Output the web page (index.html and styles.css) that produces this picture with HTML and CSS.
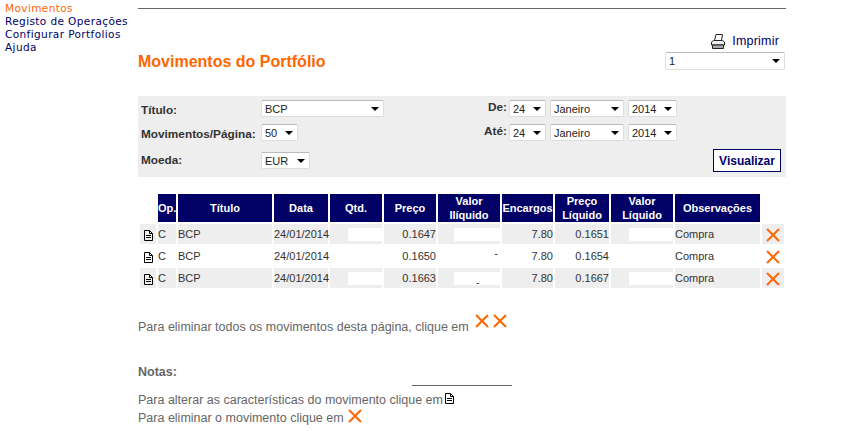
FILE: index.html
```html
<!DOCTYPE html>
<html lang="pt">
<head>
    <meta charset="UTF-8">
    <title>Movimentos do Portfólio</title>
    <link rel="stylesheet" href="styles.css">
</head>
<body>
    <svg class="defs" width="0" height="0">
        <symbol id="ico-x" viewBox="0 0 14 14">
            <path d="M1 1 13 13M13 1 1 13" fill="none" stroke="#f60" stroke-width="2"/>
        </symbol>
        <symbol id="ico-doc" viewBox="0 0 9 11">
            <path d="M.5.5h5l3 3v7h-8zM5.500.5v3h3M2 5.500h5M2 7.500h5" fill="none" stroke="#000" stroke-width="1"/>
        </symbol>
    </svg>

    <div class="sidebar">
        <a class="active" href="#">Movimentos</a>
        <a href="#">Registo de Operações</a>
        <a href="#">Configurar Portfolios</a>
        <a href="#">Ajuda</a>
    </div>

    <div class="main">
        <div class="top-line"></div>

        <div class="head">
            <h1>Movimentos do Portfólio</h1>
            <div class="head-right">
                <a class="print" href="#">
                    <svg width="16" height="16" viewBox="0 0 16 16">
                        <path d="M4.500 7.500 6 1.500h6.500L11.500 7.500" fill="#fff" stroke="#222"/>
                        <path d="M1.500 12V9l2-1.500h9l2 1.500v3z" fill="#eee" stroke="#222"/>
                        <path d="M2.500 12h11v3.500h-11z" fill="#aaa" stroke="#222"/>
                    </svg>
                    Imprimir
                </a>
                <div class="pick w-pagina"><select><option>1</option></select></div>
            </div>
        </div>

        <form class="filters">
            <label>Título:</label>
            <div class="pick w-titulo"><select><option>BCP</option></select></div>
            <label class="date-label">De:</label>
            <div class="date-row">
                <div class="pick w-num"><select><option>24</option></select></div>
                <div class="pick w-mes"><select><option>Janeiro</option></select></div>
                <div class="pick w-ano"><select><option>2014</option></select></div>
            </div>

            <label>Movimentos/Página:</label>
            <div class="pick w-num"><select><option>50</option></select></div>
            <label class="date-label">Até:</label>
            <div class="date-row">
                <div class="pick w-num"><select><option>24</option></select></div>
                <div class="pick w-mes"><select><option>Janeiro</option></select></div>
                <div class="pick w-ano"><select><option>2014</option></select></div>
            </div>

            <label class="label-mid">Moeda:</label>
            <div class="pick w-ano pick-mid"><select><option>EUR</option></select></div>
            <button class="btn" type="button">Visualizar</button>
        </form>

        <table class="moves">
            <colgroup>
                <col class="c-16"><col class="c-18"><col class="c-94"><col class="c-54">
                <col class="c-52"><col class="c-52"><col class="c-62"><col class="c-51">
                <col class="c-54"><col class="c-62"><col class="c-85"><col class="c-22">
            </colgroup>
            <thead>
                <tr>
                    <td class="blank"></td>
                    <th>Op.</th>
                    <th>Título</th>
                    <th>Data</th>
                    <th>Qtd.</th>
                    <th>Preço</th>
                    <th>Valor Ilíquido</th>
                    <th>Encargos</th>
                    <th>Preço Líquido</th>
                    <th>Valor Líquido</th>
                    <th>Observações</th>
                    <td class="blank"></td>
                </tr>
            </thead>
            <tbody>
                <tr>
                    <td class="ico"><svg class="doc"><use href="#ico-doc"/></svg></td>
                    <td>C</td>
                    <td>BCP</td>
                    <td>24/01/2014</td>
                    <td><span class="blot blot-q"></span></td>
                    <td class="num">0.1647</td>
                    <td><span class="blot blot-v"></span></td>
                    <td class="num">7.80</td>
                    <td class="num">0.1651</td>
                    <td><span class="blot blot-l"></span></td>
                    <td>Compra</td>
                    <td class="ico"><svg class="cross"><use href="#ico-x"/></svg></td>
                </tr>
                <tr>
                    <td class="ico"><svg class="doc"><use href="#ico-doc"/></svg></td>
                    <td>C</td>
                    <td>BCP</td>
                    <td>24/01/2014</td>
                    <td></td>
                    <td class="num">0.1650</td>
                    <td class="num"><span class="dash">-</span></td>
                    <td class="num">7.80</td>
                    <td class="num">0.1654</td>
                    <td></td>
                    <td>Compra</td>
                    <td class="ico"><svg class="cross"><use href="#ico-x"/></svg></td>
                </tr>
                <tr>
                    <td class="ico"><svg class="doc"><use href="#ico-doc"/></svg></td>
                    <td>C</td>
                    <td>BCP</td>
                    <td>24/01/2014</td>
                    <td><span class="blot blot-q"></span></td>
                    <td class="num">0.1663</td>
                    <td><span class="blot blot-v blot-dash">-</span></td>
                    <td class="num">7.80</td>
                    <td class="num">0.1667</td>
                    <td><span class="blot blot-l"></span></td>
                    <td>Compra</td>
                    <td class="ico"><svg class="cross"><use href="#ico-x"/></svg></td>
                </tr>
            </tbody>
        </table>

        <p class="delete-all">
            Para eliminar todos os movimentos desta página, clique em
            <span class="delete-icons">
                <svg class="cross"><use href="#ico-x"/></svg>
                <svg class="cross"><use href="#ico-x"/></svg>
            </span>
        </p>

        <p class="notes-title">Notas:</p>
        <div class="note-line"></div>
        <p class="note note-first">Para alterar as características do movimento clique em <svg class="doc"><use href="#ico-doc"/></svg></p>
        <p class="note">Para eliminar o movimento clique em <svg class="cross"><use href="#ico-x"/></svg></p>
    </div>
</body>
</html>
```

FILE: styles.css
```css
* {
    margin: 0;
    padding: 0;
    box-sizing: border-box;
}

body {
    display: flex;
    font-family: "Liberation Sans", Arial, sans-serif;
    font-size: 12.5px;
    color: #666;
    background-color: #fff;
}

.defs {
    position: absolute;
}

.sidebar {
    width: 138px;
    flex-shrink: 0;
    padding: 2px 0 0 5px;
    display: flex;
    flex-direction: column;
    font-family: "DejaVu Sans", Verdana, sans-serif;
    font-size: 10.5px;
    letter-spacing: 0.4px;
    line-height: 13px;
}

.sidebar a {
    color: #000066;
    text-decoration: none;
}

.sidebar a.active {
    color: #ff6600;
}

.main {
    width: 648px;
    padding-top: 8px;
}

.top-line {
    height: 1px;
    background-color: #666;
}

.head {
    display: flex;
    justify-content: space-between;
    align-items: flex-end;
    margin-top: 24px;
    height: 37px;
}

h1 {
    font-size: 16px;
    line-height: 18px;
    color: #ff6600;
    margin-bottom: -1px;
}

.head-right {
    display: flex;
    flex-direction: column;
    align-items: flex-end;
    gap: 3px;
    padding-right: 1px;
}

.print {
    display: flex;
    align-items: center;
    gap: 6px;
    padding-right: 6px;
    letter-spacing: 0.2px;
    color: #000066;
    text-decoration: none;
}

/* selects */
.pick {
    position: relative;
    height: 17px;
}

.pick select {
    width: 100%;
    height: 100%;
    appearance: none;
    background-color: #fff;
    border: 1px solid #ddd;
    border-top-color: #bbb;
    border-radius: 2px;
    padding-left: 3px;
    font-family: "Liberation Sans", Arial, sans-serif;
    font-size: 11px;
    color: #222;
}

.pick::after {
    content: "";
    position: absolute;
    right: 5px;
    top: 7px;
    border-left: 4px solid transparent;
    border-right: 4px solid transparent;
    border-top: 4px solid #000;
    pointer-events: none;
}

.w-pagina { width: 120px; height: 18px; }
.w-titulo { width: 123px; }
.w-num { width: 37px; }
.w-mes { width: 74px; }
.w-ano { width: 49px; }

.filters {
    display: grid;
    grid-template-columns: 120px 202px 46px 1fr;
    grid-template-rows: 17px 18px 23px;
    row-gap: 7px;
    margin-top: 26px;
    padding: 4px 5px 5px 3px;
    background-color: #eee;
    color: #333;
}

.filters label {
    font-size: 11.8px;
    font-weight: bold;
    line-height: 20px;
}

.filters label.date-label {
    text-align: right;
    padding-right: 2px;
    line-height: 15px;
}

.filters .label-mid {
    line-height: 23px;
}

.filters > .pick {
    align-self: start;
}

.filters > .pick-mid {
    align-self: center;
}

.date-row {
    display: flex;
    gap: 4px;
}

.btn {
    grid-column: 3 / 5;
    justify-self: end;
    width: 68px;
    height: 23px;
    background-color: #fff;
    border: 1px solid #000066;
    font-family: "Liberation Sans", Arial, sans-serif;
    font-size: 12px;
    font-weight: bold;
    color: #000066;
}

/* tabela */
.moves {
    width: 648px;
    table-layout: fixed;
    border-collapse: separate;
    border-spacing: 2px;
    margin-top: 15px;
    font-size: 11px;
    color: #333;
}

.c-16 { width: 16px; }
.c-18 { width: 18px; }
.c-94 { width: 94px; }
.c-54 { width: 54px; }
.c-52 { width: 52px; }
.c-62 { width: 62px; }
.c-51 { width: 51px; }
.c-85 { width: 85px; }
.c-22 { width: 22px; }

.moves th {
    height: 28px;
    padding: 0;
    background-color: #000066;
    color: #fff;
    line-height: 14px;
    font-weight: bold;
}

.moves td {
    height: 20px;
    padding: 0;
    white-space: nowrap;
    line-height: 20px;
}

.moves tbody tr:nth-child(odd) td {
    background-color: #eee;
}

.moves .blank {
    background-color: transparent;
}

.num {
    text-align: right;
}

.ico {
    text-align: center;
}

.ico svg {
    vertical-align: middle;
}

.dash {
    position: relative;
    top: -3px;
    padding-right: 2px;
}

.doc {
    width: 9px;
    height: 11px;
    flex-shrink: 0;
}

.cross {
    width: 14px;
    height: 14px;
    flex-shrink: 0;
}

.blot {
    display: block;
    height: 13px;
    margin-left: auto;
    background-color: #fff;
}

.blot-q { width: 34px; }
.blot-v { width: 46px; }
.blot-l { width: 44px; }

.blot-dash {
    padding-left: 22px;
    line-height: 20px;
}

/* notas */
.delete-all {
    display: flex;
    align-items: flex-end;
    margin-top: 24px;
    line-height: 14px;
}

.delete-icons {
    display: flex;
    gap: 4px;
    margin-left: 6px;
    margin-bottom: 6px;
}

.notes-title {
    margin-top: 31px;
    font-weight: bold;
    line-height: 14px;
}

.note-line {
    width: 100px;
    height: 1px;
    margin: 6px auto 0;
    background-color: #666;
}

.note {
    display: flex;
    align-items: flex-start;
    gap: 4px;
    line-height: 18px;
}

.note-first {
    gap: 2px;
    margin-top: 5px;
}

.note .doc {
    margin-top: 2px;
}
```
